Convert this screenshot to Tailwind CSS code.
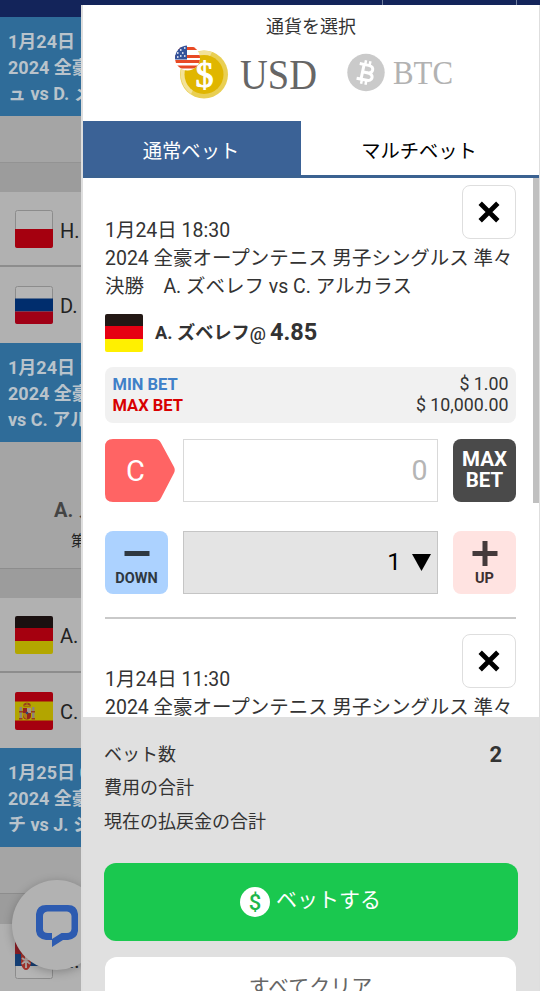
<!DOCTYPE html>
<html lang="ja">
<head>
<meta charset="utf-8">
<title>ベットスリップ</title>
<script src="https://cdn.jsdelivr.net/npm/@tailwindcss/browser@4"></script>
</head>
<body class="h-[991px] w-[540px] overflow-hidden bg-[#13245a] font-['Roboto','Noto_Sans_CJK_JP',sans-serif] text-[#333333]">
<div class="relative h-[991px] w-[540px] overflow-hidden">

  <!-- Dimmed match list behind the slip -->
  <main class="flex h-[991px] w-[81px] flex-col overflow-hidden bg-[#b1b1b1] whitespace-nowrap text-[#222]">
    <div class="h-[17px] shrink-0 bg-[#13245a]"></div>
    <div class="h-[99px] shrink-0 bg-[#2f6c99] pt-[12px] pl-2 text-[18px] leading-[26px] font-bold text-[#b9c3cb]">
      <p>1月24日 11:30</p><p>2024 全豪</p><p>ュ vs D. メ</p>
    </div>
    <div class="h-[47px] shrink-0 border-b border-[#939393] bg-[#a5a5a5]"></div>
    <div class="h-[29px] shrink-0 bg-[#9c9c9c]"></div>
    <div class="flex h-[75px] shrink-0 items-center gap-[7px] border-b-2 border-[#8d8d8d] pl-[15px]">
      <svg width="38" height="38" viewBox="0 0 38 38" class="shrink-0"><rect x=".5" y=".5" width="37" height="37" rx="2" fill="#b5b5b5" stroke="#8c8c8c"/><path d="M0 19h38v17a2 2 0 0 1-2 2H2a2 2 0 0 1-2-2z" fill="#a5000f"/></svg>
      <span class="pt-[4px] text-[20px]">H.</span>
    </div>
    <div class="flex h-[76px] shrink-0 items-center gap-[7px] pl-[15px]">
      <svg width="38" height="38" viewBox="0 0 38 38" class="shrink-0"><rect x=".5" y=".5" width="37" height="37" rx="2" fill="#b5b5b5" stroke="#8c8c8c"/><path d="M0 12.500h38v13H0z" fill="#002d6d"/><path d="M0 25.500h38V36a2 2 0 0 1-2 2H2a2 2 0 0 1-2-2z" fill="#a00016"/></svg>
      <span class="pt-[2px] text-[20px]">D.</span>
    </div>
    <div class="h-[99px] shrink-0 bg-[#2f6c99] pt-[12px] pl-2 text-[18px] leading-[26px] font-bold text-[#b9c3cb]">
      <p>1月24日 18:30</p><p>2024 全豪</p><p>vs C. アル</p>
    </div>
    <div class="h-[127px] shrink-0 border-b border-[#8d8d8d] bg-[#a5a5a5] pt-[54px]">
      <p class="pl-[54px] text-[20px] leading-[28px] font-bold text-[#444]">A. ズ</p>
      <p class="pt-[7px] pl-[71px] text-[15px] leading-[20px]">第</p>
    </div>
    <div class="h-[29px] shrink-0 bg-[#9c9c9c]"></div>
    <div class="flex h-[75px] shrink-0 items-center gap-[7px] border-b-2 border-[#8d8d8d] pl-[15px]">
      <svg width="38" height="38" viewBox="0 0 38 38" class="shrink-0"><path d="M0 12.500V2a2 2 0 0 1 2-2h34a2 2 0 0 1 2 2v10.500z" fill="#1a1010"/><path d="M0 12h38v13H0z" fill="#a5000f"/><path d="M0 25h38v11a2 2 0 0 1-2 2H2a2 2 0 0 1-2-2z" fill="#b3a700"/></svg>
      <span class="pt-[3px] text-[20px]">A.</span>
    </div>
    <div class="flex h-[75px] shrink-0 items-center gap-[7px] pl-[15px]">
      <svg width="38" height="38" viewBox="0 0 38 38" class="shrink-0"><rect width="38" height="38" rx="2" fill="#a5000f"/><path d="M0 9.500h38v19H0z" fill="#b3a500"/>
        <path d="M4.500 15H7v11H4.500zM17 15h2.500v11H17z" fill="#8e8378"/><path d="M4 19h4v1.500H4zM16 19h4v1.500h-4zM4 26h3.500v1.500H4zM16.500 26H20v1.500h-3.500z" fill="#9a3b1c"/><path d="M8 16h8v7.500a4 4 0 0 1-8 0z" fill="#96251b"/><path d="M12 16h4v5h-4z" fill="#a59584"/><path d="M8 21h4v6q-3.500-1-4-4z" fill="#b07a16"/><circle cx="12" cy="21" r="1.300" fill="#34456e"/><path d="M8.500 14.500q-1-3.500 3.500-4 4.500.500 3.500 4z" fill="#9a3b1c"/><path d="M9.500 13.500h5M12 10.500v3" stroke="#b3a500" stroke-width=".8"/></svg>
      <span class="pt-[2px] text-[20px]">C.</span>
    </div>
    <div class="h-[99px] shrink-0 bg-[#2f6c99] pt-[12px] pl-2 text-[18px] leading-[26px] font-bold text-[#b9c3cb]">
      <p>1月25日 09:30</p><p>2024 全豪</p><p>チ vs J. シ</p>
    </div>
    <div class="h-[47px] shrink-0 border-b border-[#8d8d8d] bg-[#a5a5a5]"></div>
    <div class="h-[30px] shrink-0 bg-[#9c9c9c]"></div>
    <div class="flex h-[75px] shrink-0 items-start gap-[7px] pt-[17px] pl-[15px]">
      <svg width="38" height="38" viewBox="0 0 38 38" class="shrink-0"><rect x=".5" y=".5" width="37" height="37" rx="2" fill="#b5b5b5" stroke="#8c8c8c"/><path d="M0 13V2a2 2 0 0 1 2-2h34a2 2 0 0 1 2 2v11z" fill="#8c1d25"/><path d="M0 13h38v12H0z" fill="#153f75"/><path d="M6 13q5-5 10 0v10q-2 6-5 6t-5-6z" fill="#a3332c"/><path d="M11 13v14M7 17q4 4 8 0M7 23q4-5 8 0" stroke="#b5aaa8" stroke-width="1.800" fill="none"/><path d="M7 12l1-4 3 2 3-2 1 4z" fill="#ad7b22"/></svg>
      <span class="pt-[8px] text-[20px] leading-[24px]">N.</span>
    </div>
  </main>

  <!-- Chat launcher -->
  <div class="absolute top-[880px] left-[12px] flex size-[90px] items-center justify-center rounded-full bg-[#b2b2b2] shadow-[0_2px_10px_rgba(0,0,0,0.25)]">
    <svg width="42" height="42" viewBox="0 0 42 42" class="translate-y-px"><path fill="#2d5bb0" fill-rule="evenodd" d="M10 0h22q9 0 10 9v17q-1 8-10 9h-5l-11 7v-7h-6Q1 34 0 26V9Q1 0 10 0zm1.500 6.500Q7 7 7 11v13q0 4 5 4h4v6l9.500-6H31q4 0 4.500-4V11q-.5-4-4.500-4.500z"/></svg>
  </div>

  <!-- Header divider ticks -->
  <div class="absolute top-0 left-[382px] h-[5px] w-[135px] border-x border-[#71809f]"></div>

  <!-- Bet slip -->
  <aside class="absolute top-[5px] left-[81px] flex h-[986px] w-[459px] flex-col overflow-hidden border-r border-l-2 border-r-[#dedede] border-l-[#dedede] bg-white">
    <header class="h-[116px] shrink-0">
      <h1 class="pt-[9px] text-center text-[18px] leading-[26px]">通貨を選択</h1>
      <div class="flex items-start pt-[5px] pl-[91px]">
        <svg width="56" height="56" viewBox="0 0 56 56" class="shrink-0">
          <circle cx="30" cy="29.500" r="24" fill="#e9cf53"/><path d="M14 12A24 24 0 0 1 38 7L17 49A24 24 0 0 1 14 12z" fill="#f3e298"/><circle cx="30" cy="29.500" r="19.500" fill="#e0b600"/>
          <text x="30.500" y="41.500" text-anchor="middle" font-family="Liberation Serif" font-size="36" fill="#fff" stroke="#fff">$</text>
          <clipPath id="us"><circle cx="13.500" cy="13" r="12.500"/></clipPath>
          <g clip-path="url(#us)"><path d="M0 0h28v27H0z" fill="#fff"/><path d="M0 3.500h28M0 11.500h28M0 16.500h28M0 22h28" stroke="#e84a24" stroke-width="2.800"/><path d="M0 0h13v14.500H0z" fill="#34539b"/><path d="M6 5h1.500M10 3h1.500M3 8h1.500M8 8h1.500M6 11h1.500M10 11h1.500M3 12h1.500" stroke="#fff" stroke-width="1.500"/></g>
        </svg>
        <svg width="80" height="62" viewBox="0 0 80 62" class="ml-[9px] shrink-0"><text x="1" y="44" textLength="77" lengthAdjust="spacingAndGlyphs" font-family="Liberation Serif" font-size="42" fill="#666">USD</text></svg>
        <svg width="38" height="56" viewBox="0 0 38 56" class="ml-[28px] shrink-0"><circle cx="19" cy="27.500" r="18.700" fill="#cacaca"/>
          <g transform="translate(19 27.500) rotate(12)" fill="none" stroke="#fff"><path d="M-3.500-7.500v15M-8-7.500h9q5 0 5 3.700T1 0h-4.500M1 0q6 0 6 3.800T1 7.500h-9" stroke-width="3"/><path d="M-2.500-12v4.500M2-12v4.500M-2.500 7.500V12M2 7.500V12" stroke-width="2.500"/></g></svg>
        <svg width="64" height="58" viewBox="0 0 64 58" class="ml-[7px] shrink-0"><text x="1" y="38.500" textLength="60" lengthAdjust="spacingAndGlyphs" font-family="Liberation Serif" font-size="33" fill="#b2b2b2">BTC</text></svg>
      </div>
    </header>

    <nav class="flex h-[57px] shrink-0 border-b-3 border-[#3b6291] text-center text-[19.300px] leading-[61px]">
      <div class="w-[218px] bg-[#3b6296] pr-[2px] text-white">通常ベット</div>
      <div class="flex-1 pr-[2px] text-black">マルチベット</div>
    </nav>

    <div class="flex h-[539px] shrink-0 overflow-hidden">
      <div class="w-[433px] shrink-0 pt-[7px] pl-[22px]">
        <section class="h-[434px] border-b-2 border-[#c9c9c9]">
          <div class="flex justify-end">
            <button class="flex size-[54px] items-center justify-center rounded-[8px] border border-[#dedede]"><svg width="22" height="22" viewBox="0 0 22 22"><path d="M2.200 2.200l17.600 17.600M19.800 2.200L2.200 19.800" stroke="#000" stroke-width="4.800"/></svg></button>
          </div>
          <p class="-mt-[22px] text-[19.480px] leading-[28px] whitespace-nowrap">1月24日 18:30<br>2024 全豪オープンテニス 男子シングルス 準々<br>決勝　A. ズベレフ vs C. アルカラス</p>
          <div class="mt-[13px] flex h-[38px] items-center">
            <svg width="38" height="38" viewBox="0 0 38 38"><path d="M0 12.500V2a2 2 0 0 1 2-2h34a2 2 0 0 1 2 2v10.500z" fill="#231815"/><path d="M0 12h38v13H0z" fill="#e60012"/><path d="M0 25h38v11a2 2 0 0 1-2 2H2a2 2 0 0 1-2-2z" fill="#fff000"/></svg>
            <p class="flex items-baseline pl-[12px] leading-[30px] font-bold whitespace-nowrap"><span class="-translate-y-px text-[18.200px]">A. ズベレフ</span><span class="text-[18px] font-medium">@</span><span class="ml-[4px] text-[23.500px]">4.85</span></p>
          </div>
          <div class="mt-[15px] h-[56px] rounded-[8px] bg-[#f1f1f1] px-[7.500px] pt-[7px] text-[17.800px] leading-[21px]">
            <div class="flex h-[21px] justify-between"><b class="text-[16.500px] text-[#4080c8]">MIN BET</b><span class="-mt-px">$ 1.00</span></div>
            <div class="flex h-[21px] justify-between"><b class="text-[16.500px] text-[#d80000]">MAX BET</b><span class="-mt-px">$ 10,000.00</span></div>
          </div>
          <div class="mt-[15.500px] flex h-[63px] justify-between">
            <div class="relative w-[70px]">
              <svg width="70" height="63" viewBox="0 0 70 63"><path d="M8 0h42q4 0 6 4l13 24q1.500 3 0 6L56 59q-2 4-6 4H8q-8 0-8-8V8q0-8 8-8z" fill="#ff6464"/></svg>
              <span class="absolute top-[17px] left-[21px] text-[29px] leading-[30px] text-white">C</span>
            </div>
            <div class="-ml-px w-[255px] border border-[#d9d9d9] pr-[9px] text-right text-[28.500px] leading-[62px] text-[#b5b5b5]">0</div>
            <button class="ml-[7px] w-[63px] rounded-[8px] bg-[#4a4a4a] pb-px text-[20.500px] leading-[21px] font-bold text-white">MAX<br>BET</button>
          </div>
          <div class="mt-[29.500px] flex h-[63px] justify-between">
            <button class="flex w-[63px] flex-col items-center rounded-[8px] bg-[#acd2ff] pt-[9px] text-[14.500px] leading-[22px] font-bold text-[#2e3841]"><svg width="26" height="28" viewBox="0 0 26 28"><path d="M.5 13.500h25" stroke="#2e3841" stroke-width="5"/></svg>DOWN</button>
            <div class="flex w-[255px] items-center justify-end gap-[11px] border border-[#c5c5c5] bg-[#e4e4e4] pr-[6px] text-[24.500px] text-black"><span>1</span><svg width="19" height="17" viewBox="0 0 20 17" preserveAspectRatio="none"><path d="M0 0h20L10 17z"/></svg></div>
            <button class="flex w-[63px] flex-col items-center rounded-[8px] bg-[#ffe3e1] pt-[9px] text-[14.500px] leading-[22px] font-bold text-[#3c3030]"><svg width="26" height="28" viewBox="0 0 26 28"><path d="M.5 13.500h25M13 1v25" stroke="#443a3b" stroke-width="5"/></svg>UP</button>
          </div>
        </section>
        <section class="pt-[15px]">
          <div class="flex justify-end">
            <button class="flex size-[54px] items-center justify-center rounded-[8px] border border-[#dedede]"><svg width="22" height="22" viewBox="0 0 22 22"><path d="M2.200 2.200l17.600 17.600M19.800 2.200L2.200 19.800" stroke="#000" stroke-width="4.800"/></svg></button>
          </div>
          <p class="-mt-[22px] text-[19.480px] leading-[28px] whitespace-nowrap">1月24日 11:30<br>2024 全豪オープンテニス 男子シングルス 準々</p>
        </section>
      </div>
      <div class="ml-[17px] h-[325px] w-[6px] bg-[#c0c0c0]"></div>
    </div>

    <footer class="-mx-[2px] h-[274px] shrink-0 bg-[#e0e0e0] pt-[20.500px] pr-[22px] pl-[23px]">
      <dl class="text-[18px] leading-[33.500px]">
        <div class="flex justify-between pr-[17px]"><dt>ベット数</dt><dd class="text-[22px] font-bold">2</dd></div>
        <div><dt>費用の合計</dt></div>
        <div><dt>現在の払戻金の合計</dt></div>
      </dl>
      <button class="mt-[24.500px] -ml-[0.5px] flex h-[78px] w-[414px] items-center justify-center gap-[6px] rounded-[12px] bg-[#1ac84f] text-[21px] text-white">
        <svg width="30" height="30" viewBox="0 0 30 30"><circle cx="15" cy="15" r="15" fill="#fff"/><text x="15" y="22.500" text-anchor="middle" font-family="Roboto" font-size="22" font-weight="500" fill="#1eb64c">$</text></svg>
        <span class="-mt-[2px]">ベットする</span>
      </button>
      <div class="mt-[16px] ml-px h-[34px] w-[411px] rounded-t-[12px] bg-white pt-[15px] text-center text-[21px] leading-[31px] text-[#666]">すべてクリア</div>
    </footer>
  </aside>
</div>
</body>
</html>
